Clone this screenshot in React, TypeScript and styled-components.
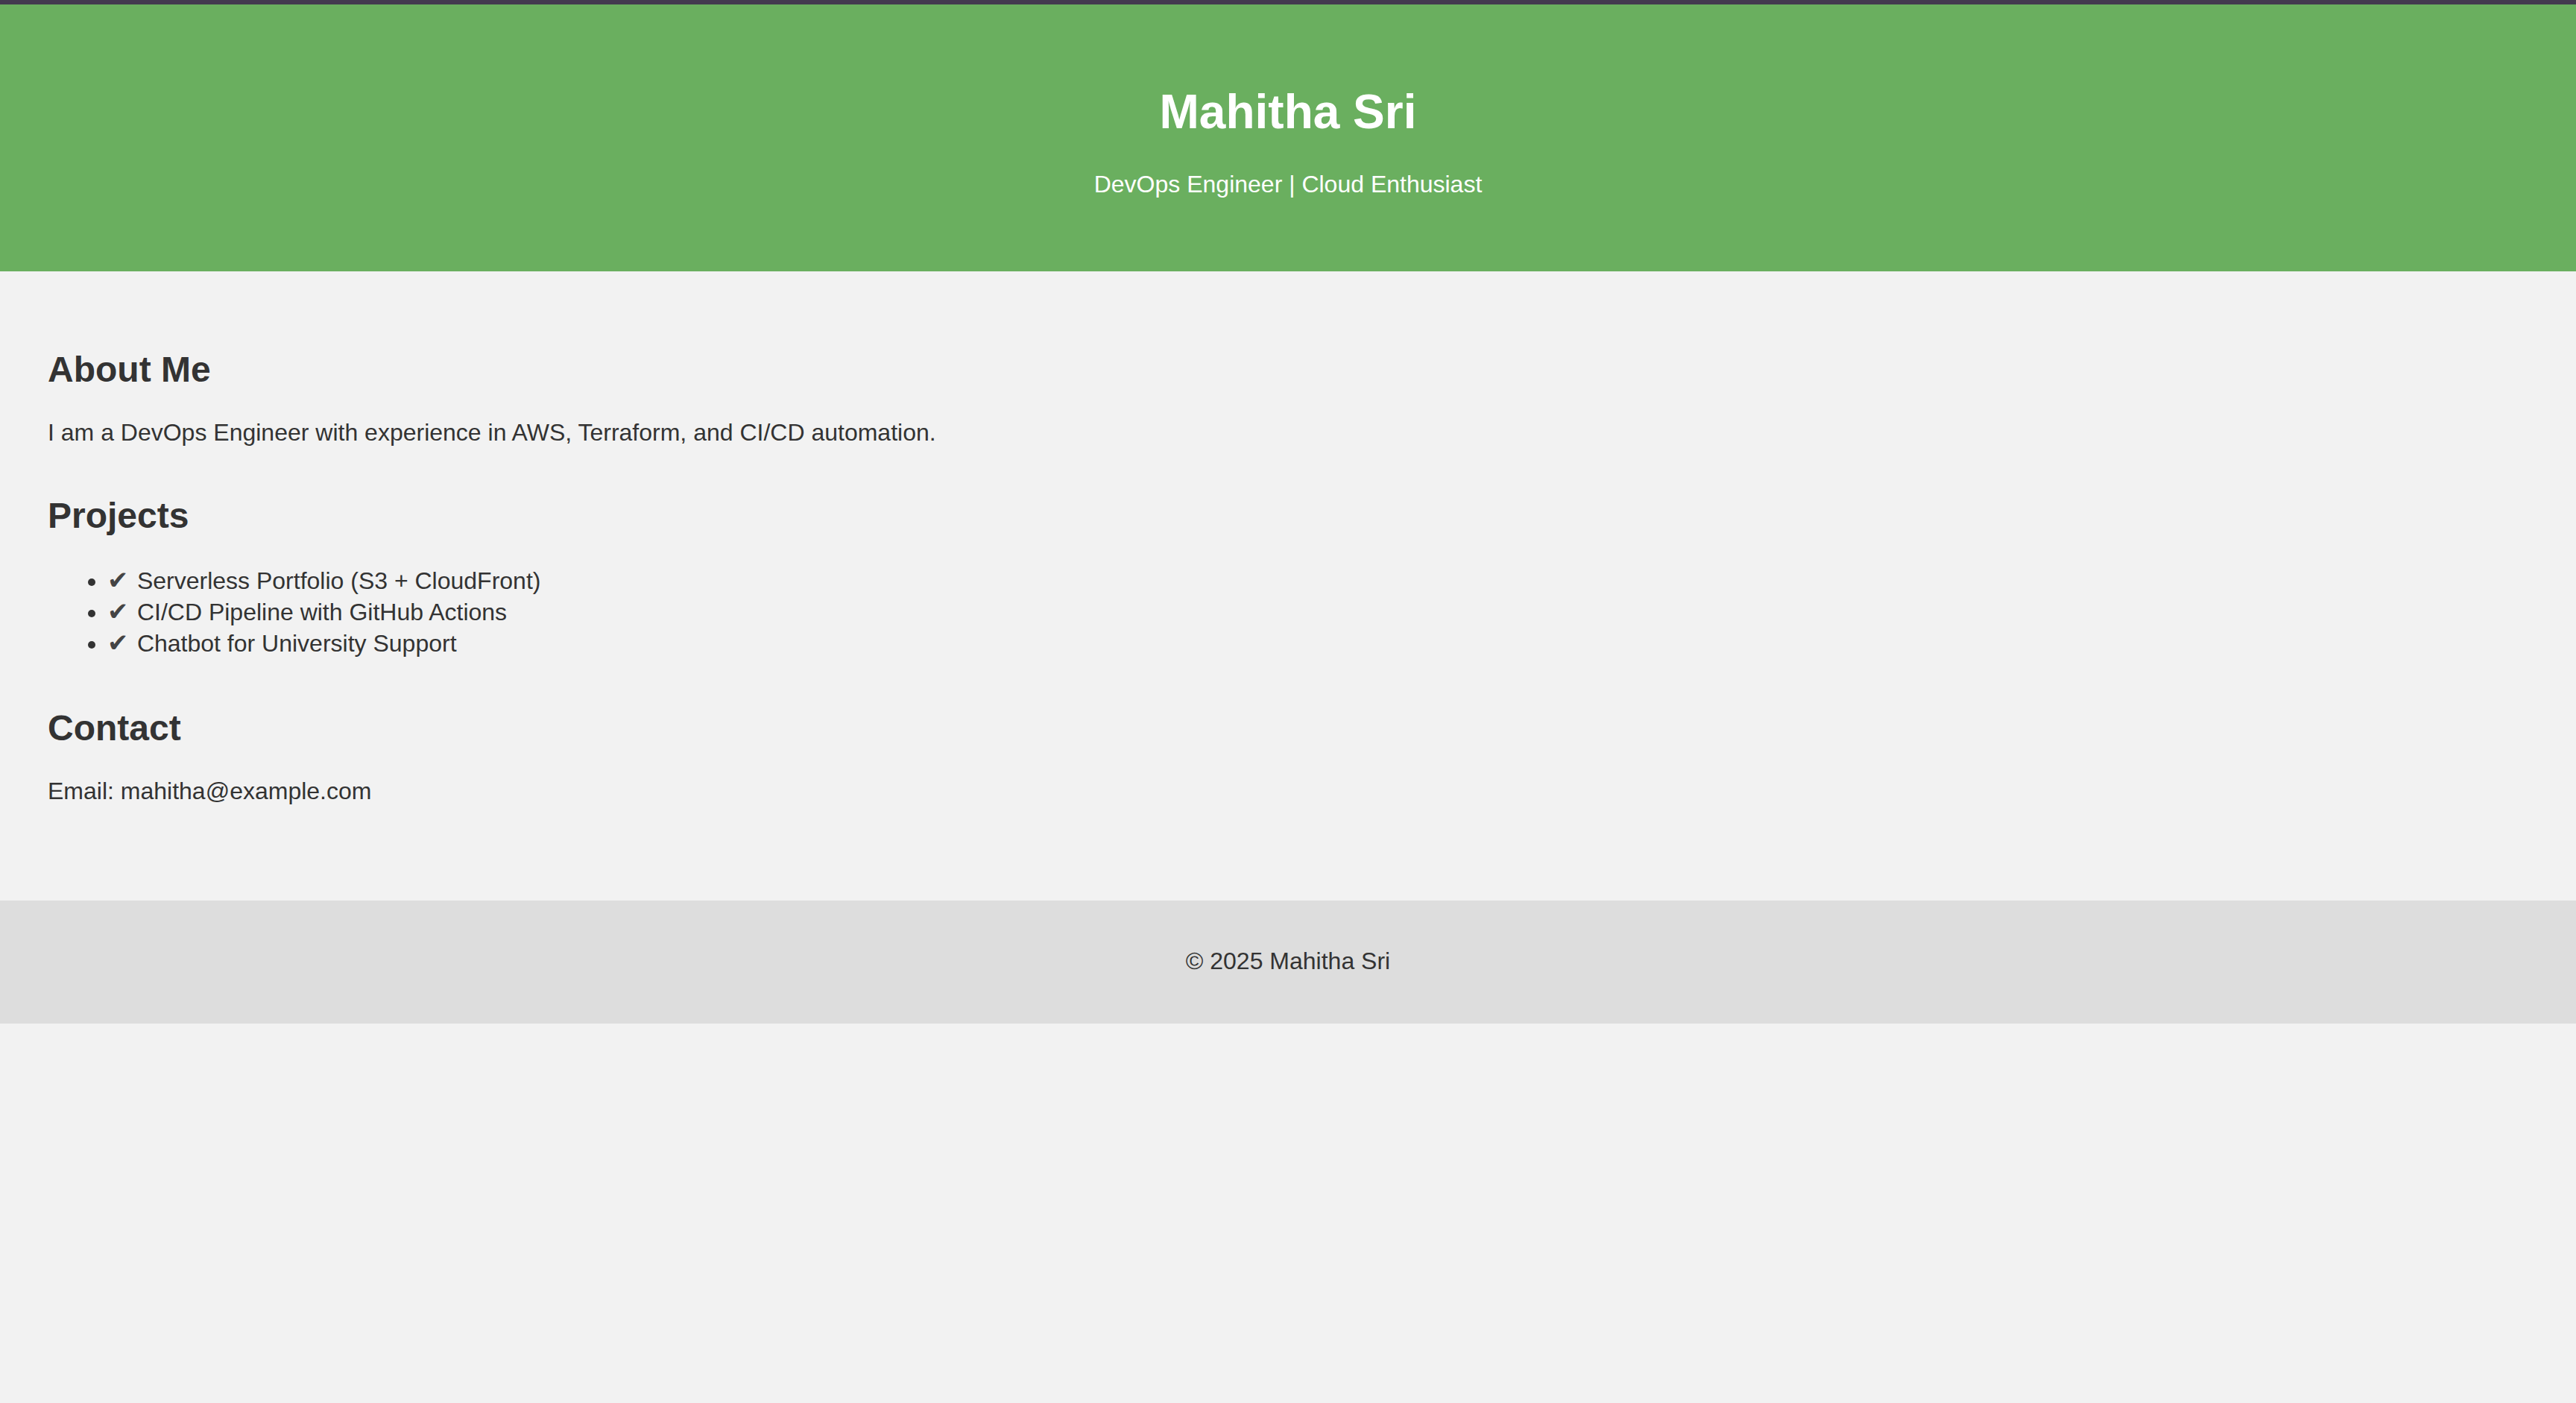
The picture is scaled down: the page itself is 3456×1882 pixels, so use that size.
import React from "react";
import styled, { createGlobalStyle } from "styled-components";

const GlobalStyle = createGlobalStyle`
  html, body {
    margin: 0;
    padding: 0;
    background: #f2f2f2;
  }
  body {
    font-family: "Liberation Sans", Arial, Helvetica, sans-serif;
    color: #333333;
  }
`;

const Page = styled.div`
  display: flex;
  flex-direction: column;
  min-height: 1882px;
  background: #f2f2f2;
`;

const Header = styled.header`
  background: #6aaf5f;
  border-top: 6px solid #433a4f;
  color: #ffffff;
  text-align: center;
  padding: 107px 32px 98px;
`;

const Title = styled.h1`
  margin: 0;
  font-size: 64px;
  line-height: 74px;
  font-weight: 700;
`;

const Subtitle = styled.p`
  margin: 42px 0 0;
  font-size: 32px;
  line-height: 37px;
`;

const Main = styled.main`
  display: flex;
  flex-direction: column;
  gap: 65px;
  padding: 104px 64px 128px;
`;

const Section = styled.section`
  display: flex;
  flex-direction: column;
  gap: 39px;
`;

const Heading = styled.h2`
  margin: 0;
  font-size: 48px;
  line-height: 55px;
  font-weight: 700;
  color: #333333;
`;

const Text = styled.p`
  margin: 0;
  font-size: 32px;
  line-height: 37px;
  color: #333333;
`;

const List = styled.ul`
  margin: 0;
  padding-left: 80px;
  list-style: disc;
`;

const Item = styled.li`
  font-size: 32px;
  line-height: 42px;
  height: 42px;
  color: #333333;
`;

const Check = styled.span`
  display: inline-block;
  width: 31px;
  font-family: "DejaVu Sans", sans-serif;
  font-size: 34px;
  line-height: 1;
  color: #444444;
`;

const Footer = styled.footer`
  background: #dddddd;
  text-align: center;
  padding: 63px 32px 65px;
`;

const FooterText = styled.p`
  margin: 0;
  font-size: 32px;
  line-height: 37px;
  color: #333333;
`;

const projects = [
  "Serverless Portfolio (S3 + CloudFront)",
  "CI/CD Pipeline with GitHub Actions",
  "Chatbot for University Support",
];

export default function App() {
  return (
    <>
      <GlobalStyle />
      <Page>
        <Header>
          <Title>Mahitha Sri</Title>
          <Subtitle>DevOps Engineer | Cloud Enthusiast</Subtitle>
        </Header>
        <Main>
          <Section>
            <Heading>About Me</Heading>
            <Text>
              I am a DevOps Engineer with experience in AWS, Terraform, and CI/CD automation.
            </Text>
          </Section>
          <Section>
            <Heading>Projects</Heading>
            <List>
              {projects.map((p) => (
                <Item key={p}>
                  <Check>✔</Check> {p}
                </Item>
              ))}
            </List>
          </Section>
          <Section>
            <Heading>Contact</Heading>
            <Text>Email: mahitha@example.com</Text>
          </Section>
        </Main>
        <Footer>
          <FooterText>© 2025 Mahitha Sri</FooterText>
        </Footer>
      </Page>
    </>
  );
}
